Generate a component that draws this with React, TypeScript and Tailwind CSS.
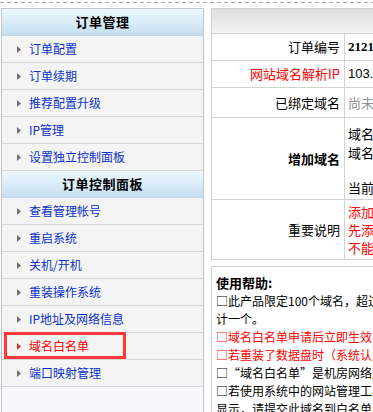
import React from "react";

const Arrow = ({ red }: { red?: boolean }) => (
  <svg width="5" height="7" viewBox="0 0 5 7" className="shrink-0">
    <polygon points="0,0 4,3.5 0,7" fill={red ? "#e03030" : "#707070"} />
  </svg>
);

const Row = ({ text, active }: { text: string; active?: boolean }) => (
  <div className="relative h-[27px] flex items-center border-b border-[#d6d6d6] bg-[#f4f4f4] pl-[15px] gap-[7px]">
    <Arrow red={active} />
    <span className={active ? "text-[#ff0000]" : "text-[#0a32c8]"}>{text}</span>
    {active && (
      <div className="absolute left-[2px] top-[-1px] w-[122px] h-[27px] border-[3px] border-[#ff3838]" />
    )}
  </div>
);

const Header = ({ text }: { text: string }) => (
  <div className="h-[27px] flex items-center justify-center border-b border-[#c4d6e4] bg-[linear-gradient(180deg,#edf7fd_0%,#d8ebf7_55%,#c4def0_100%)] font-bold text-[13px] text-black tracking-[0.5px]">
    {text}
  </div>
);

export default function App() {
  const cjk = "font-['Noto_Sans_CJK_SC','Noto_Sans',sans-serif]";
  return (
    <div className={`w-[373px] h-[412px] overflow-hidden bg-white text-[12px] leading-[18px] ${cjk}`}>
      <div className="h-[2px]" />
      <div className="h-px w-full bg-[repeating-linear-gradient(90deg,#a8a8a8_0_4px,transparent_4px_7px)]" />
      <div className="flex items-start mt-[5px]">
        {/* left sidebar */}
        <div className="ml-[1px] w-[203px] h-[404px] shrink-0 border-l border-t border-r border-[#bcc3ca] bg-[#f8f8fc]">
          <Header text="订单管理" />
          <Row text="订单配置" />
          <Row text="订单续期" />
          <Row text="推荐配置升级" />
          <Row text="IP管理" />
          <Row text="设置独立控制面板" />
          <Header text="订单控制面板" />
          <Row text="查看管理帐号" />
          <Row text="重启系统" />
          <Row text="关机/开机" />
          <Row text="重装操作系统" />
          <Row text="IP地址及网络信息" />
          <Row text="域名白名单" active />
          <Row text="端口映射管理" />
        </div>

        {/* right content */}
        <div className="ml-[7px] w-[420px] shrink-0 flex flex-col">
          <div className="border-l border-t border-r border-b border-[#d2d2d2]">
            <div className="h-[25px] border-b border-[#d2d2d2] bg-[linear-gradient(180deg,#dcdcdc_0%,#e6e6e6_40%,#f4f4f4_100%)]" />
            <div className="flex h-[27px] border-b border-[#d2d2d2]">
              <div className="w-[133px] shrink-0 border-r border-[#d2d2d2] flex items-center justify-end pr-[4px] text-[13px]">订单编号</div>
              <div className="flex items-center pl-[3px] font-['Liberation_Serif',serif] font-bold text-[13px] whitespace-nowrap">212158</div>
            </div>
            <div className="flex h-[27px] border-b border-[#d2d2d2]">
              <div className="w-[133px] shrink-0 border-r border-[#d2d2d2] flex items-center justify-end pr-[4px] text-[13px] text-[#ff0000]">网站域名解析IP</div>
              <div className="flex items-center pl-[3px] font-['Liberation_Sans',sans-serif] text-[13px] whitespace-nowrap">103.45.12.88</div>
            </div>
            <div className="flex h-[30px] border-b border-[#d2d2d2]">
              <div className="w-[133px] shrink-0 border-r border-[#d2d2d2] flex items-center justify-end pr-[4px] text-[13px]">已绑定域名</div>
              <div className="flex items-center pl-[3px] text-[13px] text-[#909090] whitespace-nowrap">尚未绑定任何域名</div>
            </div>
            <div className="flex h-[82px] border-b border-[#d2d2d2]">
              <div className="w-[133px] shrink-0 border-r border-[#d2d2d2] flex items-center justify-end pr-[4px] text-[13px] font-bold">增加域名</div>
              <div className="flex flex-col pl-[3px] pt-[6px] text-[13px] leading-[19px] whitespace-nowrap">
                <div>域名格式：www.abc.com</div>
                <div>域名：</div>
                <div className="h-[16px]" />
                <div>当前已添加0个域名</div>
              </div>
            </div>
            <div className="flex h-[59px]">
              <div className="w-[133px] shrink-0 border-r border-[#d2d2d2] flex items-center justify-end pr-[4px] text-[13px]">重要说明</div>
              <div className="flex flex-col justify-center pl-[3px] text-[13px] leading-[18px] text-[#ff0000] whitespace-nowrap">
                <div>添加域名前请先确认</div>
                <div>先添加域名再解析</div>
                <div>不能添加未备案域名</div>
              </div>
            </div>
          </div>

          <div className="mt-[6px] border-l border-t border-r border-[#d2d2d2] pl-[4px] pt-[7px] text-[12px] leading-[18px] whitespace-nowrap text-black">
            <div className="font-bold text-[13px]">使用帮助:</div>
            <div>□此产品限定100个域名，超过100个域名按每100个域名另</div>
            <div>计一个。</div>
            <div className="text-[#ff0000]">□域名白名单申请后立即生效</div>
            <div className="text-[#ff0000]">□若重装了数据盘时（系统认为域名已失效）需重新添加</div>
            <div>□“域名白名单”是机房网络层面的访问控制</div>
            <div>□若使用系统中的网站管理工具添加了网站，也请在此</div>
            <div>显示，请提交此域名到白名单中</div>
          </div>
        </div>
      </div>
    </div>
  );
}
